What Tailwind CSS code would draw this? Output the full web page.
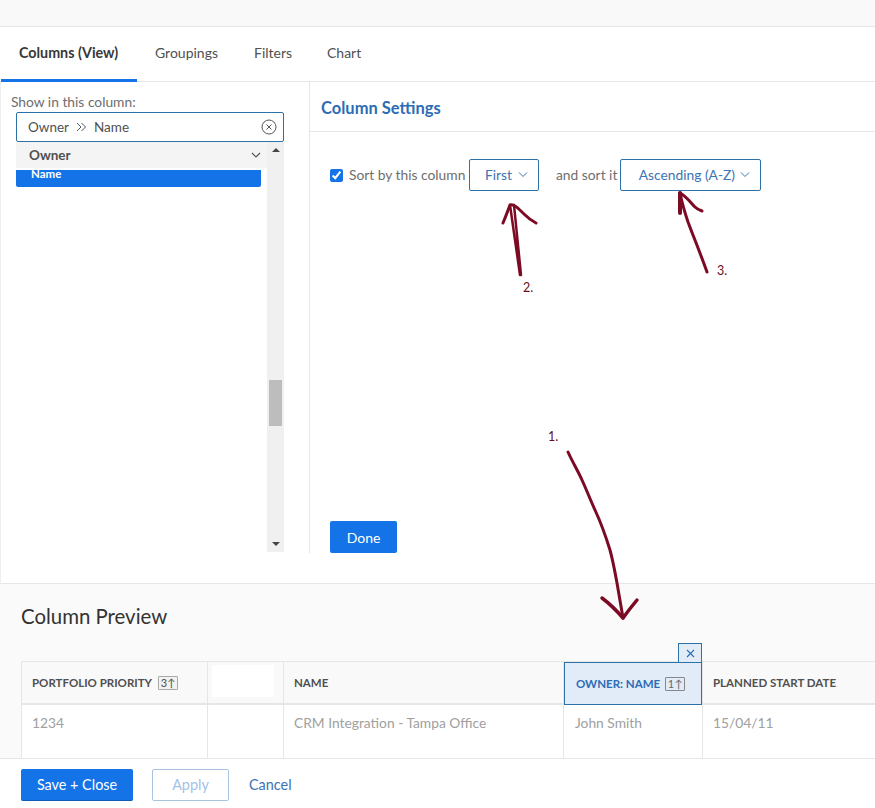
<!DOCTYPE html>
<html lang="en">
<head>
    <meta charset="UTF-8">
    <meta name="viewport" content="width=device-width, initial-scale=1.0">
    <title>Column Settings</title>
    <script src="https://cdn.jsdelivr.net/npm/@tailwindcss/browser@4"></script>
</head>
<body class="font-['Lato','Open_Sans',sans-serif] text-[#505050]">
    <div class="relative w-[875px] h-[808px] flex flex-col overflow-hidden bg-white">
        <!-- top strip -->
        <div class="h-[27px] shrink-0 bg-[#f9f9f9] border-b border-[#e6e6e6]"></div>

        <!-- tabs -->
        <div class="h-[55px] shrink-0 flex pl-px border-b border-[#e6e6e6] text-[14px]">
            <a class="w-[136px] pl-[18px] pt-[15px] text-[14.300px] font-bold text-[#383838] border-b-[3px] border-[#1473e6] h-[55px] whitespace-nowrap">Columns (View)</a>
            <a class="pl-[18px] pt-[15px] w-[117px]">Groupings</a>
            <a class="pt-[15px] w-[73px]">Filters</a>
            <a class="pt-[15px]">Chart</a>
        </div>

        <!-- column picker + settings -->
        <div class="h-[502px] shrink-0 flex items-start border-l border-[#eeeeee] border-b border-b-[#e6e6e6]">
            <div class="w-[309px] h-[471px] border-r border-[#e6e6e6] pt-[12px]">
                <div class="pl-[10px] text-[13.800px] leading-[16px] text-[#6e6e6e]">Show in this column:</div>
                <div class="ml-[15px] mt-[2px] w-[268px] h-[30px] flex items-center justify-between pl-[11px] pr-[6px] border border-[#2c72a8] rounded-[2px] text-[13.500px]">
                    <span class="flex items-center gap-[7px]">Owner
                        <svg width="11" height="10" viewBox="0 0 11 10" fill="none" stroke="#555" stroke-width="1"><path d="M1 1l4 4-4 4M5.500 1l4 4-4 4"/></svg>
                        Name</span>
                    <svg width="16" height="16" viewBox="0 0 16 16" fill="none" stroke="#555" stroke-width="1"><circle cx="8" cy="8" r="7"/><path d="M5.500 5.500l5 5M10.500 5.500l-5 5"/></svg>
                </div>
                <div class="ml-[15px] w-[268px] h-[410px] flex">
                    <div class="w-[251px]">
                        <div class="h-[26px] flex items-center justify-between bg-[#f4f4f4] pl-[13px] pr-[6px] text-[13.500px] font-bold text-[#505050]">Owner
                            <svg width="10" height="7" viewBox="0 0 10 7" fill="none" stroke="#555" stroke-width="1.200"><path d="M1 1l4 4 4-4"/></svg>
                        </div>
                        <div class="mt-[2px] w-[245px] h-[17px] bg-[#1473e6] rounded-b-[2px] pl-[15px] text-[11.500px] font-bold leading-[8px] text-white overflow-hidden">Name</div>
                    </div>
                    <div class="w-[17px] h-full bg-[#f0f0f0] flex flex-col items-center relative">
                        <span class="mt-[6px] w-0 h-0 border-x-[4px] border-x-transparent border-b-[4px] border-b-[#444]"></span>
                        <div class="absolute top-[238px] w-[13px] h-[46px] bg-[#bdbdbd]"></div>
                        <span class="mt-auto mb-[6px] w-0 h-0 border-x-[4px] border-x-transparent border-t-[4px] border-t-[#444]"></span>
                    </div>
                </div>
            </div>
            <div class="flex-1 h-[471px] flex flex-col">
                <div class="h-[50px] shrink-0 border-b border-[#e6e6e6] pl-[11px] pt-[16px] text-[16.500px] leading-[20px] font-bold text-[#2d6cb5]">Column Settings</div>
                <div class="flex items-center pl-[20px] pt-[27px] text-[13.800px] text-[#6e6e6e]">
                    <input type="checkbox" checked class="w-[13px] h-[13px] accent-[#1473e6] mr-[6px]">
                    <span class="w-[120px] whitespace-nowrap">Sort by this column</span>
                    <button class="w-[70px] h-[32px] flex items-center justify-end gap-[6px] pr-[10px] border border-[#2c72a8] rounded-[2px] text-[#3d72b5]">First
                        <svg width="10" height="6" viewBox="0 0 10 6" fill="none" stroke="#3d72b5" stroke-width="1"><path d="M1 .5l4 4 4-4"/></svg>
                    </button>
                    <span class="ml-[17px] w-[64px] whitespace-nowrap">and sort it</span>
                    <button class="w-[141px] h-[32px] flex items-center justify-end gap-[5px] pr-[10px] border border-[#2c72a8] rounded-[2px] text-[#3d72b5] whitespace-nowrap">Ascending (A-Z)
                        <svg width="10" height="6" viewBox="0 0 10 6" fill="none" stroke="#3d72b5" stroke-width="1"><path d="M1 .5l4 4 4-4"/></svg>
                    </button>
                </div>
                <button class="mt-auto ml-[20px] w-[67px] h-[32px] bg-[#1473e6] rounded-[2px] text-white text-[14px]">Done</button>
            </div>
        </div>

        <!-- preview -->
        <div class="flex-1 min-h-0 bg-[#fafafa] pl-[21px] pt-[20px] overflow-hidden">
            <h2 class="text-[20.400px] leading-[24px] font-normal text-[#333333]">Column Preview</h2>
            <div class="relative mt-[33px] flex h-[120px] bg-white border-l border-t border-[#e6e6e6] text-[13.800px]">
                <div class="w-[186px] border-r border-[#e6e6e6]">
                    <div class="h-[43px] flex items-center gap-[6px] pl-[10px] bg-[#f9f9f9] border-b-[2px] border-[#e6e6e6] text-[11.500px] font-bold text-[#505050]">PORTFOLIO PRIORITY
                        <span class="w-[20px] h-[14px] flex items-center justify-center border border-[#aaa] rounded-[1px] text-[11px] leading-none font-normal bg-[#f2f2f2]">3↑</span>
                    </div>
                    <div class="pl-[10px] pt-[8px] text-[#a0a0a0]">1234</div>
                </div>
                <div class="w-[76px] border-r border-[#e6e6e6]">
                    <div class="h-[43px] bg-[#f9f9f9] border-b-[2px] border-[#e6e6e6] px-[4px] pt-[3px] pb-[6px]"><div class="w-[62px] h-[32px] bg-white"></div></div>
                </div>
                <div class="w-[280px] border-r border-[#e6e6e6]">
                    <div class="h-[43px] flex items-center pl-[10px] bg-[#f9f9f9] border-b-[2px] border-[#e6e6e6] text-[11.500px] font-bold">NAME</div>
                    <div class="pl-[10px] pt-[8px] text-[#a0a0a0]">CRM Integration - Tampa Office</div>
                </div>
                <div class="w-[139px] border-r border-[#e6e6e6] relative">
                    <div class="h-[43px] flex items-center gap-[5px] pl-[11px] bg-[#e1ecf8] border border-[#2c72a8] text-[11.500px] font-bold text-[#2d6cb5]">OWNER: NAME
                        <span class="w-[20px] h-[14px] flex items-center justify-center border border-[#888] rounded-[1px] text-[11px] leading-none font-normal text-[#666]">1↑</span>
                    </div>
                    <div class="absolute -top-[19px] right-0 w-[24px] h-[20px] flex items-center justify-center bg-[#e1ecf8] border border-[#2c72a8]">
                        <svg width="9" height="9" viewBox="0 0 9 9" fill="none" stroke="#2d6cb5" stroke-width="1.100"><path d="M1 1l7 7M8 1l-7 7"/></svg>
                    </div>
                    <div class="pl-[11px] pt-[8px] text-[#a0a0a0]">John Smith</div>
                </div>
                <div class="flex-1">
                    <div class="h-[43px] flex items-center pl-[10px] bg-[#f9f9f9] border-b-[2px] border-[#e6e6e6] text-[11.500px] font-bold">PLANNED START DATE</div>
                    <div class="pl-[10px] pt-[8px] text-[#a0a0a0]">15/04/11</div>
                </div>
            </div>
        </div>

        <!-- footer -->
        <div class="relative h-[50px] shrink-0 flex items-center gap-[19px] pl-[21px] pt-[2px] bg-white border-t border-[#e6e6e6] text-[14.400px]">
            <button class="w-[112px] h-[32px] pt-px bg-[#1473e6] rounded-[2px] text-white border-b border-[#0f5cb8]">Save + Close</button>
            <button class="w-[77px] h-[32px] pt-px border border-[#a9c4de] rounded-[2px] text-[#a3c3e8]">Apply</button>
            <a class="ml-px pt-px text-[#3d72b5]">Cancel</a>
        </div>

        <!-- hand drawn annotations over the screenshot -->
        <svg class="absolute inset-0 pointer-events-none" width="875" height="808" viewBox="0 0 875 808" fill="none" stroke="#7b0a24" stroke-width="3" stroke-linecap="round" stroke-linejoin="round">
            <path d="M568 452C573 463 578 471 582 480C587 491 590 499 595 510C601 523 606 537 610 550C613 561 615 572 617 583C619 595 621 606 623 618"/>
            <path d="M602 598C610 604 617 611 623 618C628 611 632 606 637 600" stroke-width="3.500"/>
            <path d="M520 275L510 205M521 275L514 205" stroke-width="2.500"/>
            <path d="M503 223C506 216 508 210 510 205C514 204 518 208 524 214C528 218 532 221 536 223"/>
            <path d="M707 272C701 255 694 238 688 222C685 213 682 203 680 193"/>
            <path d="M680 213L680 193" stroke-width="4"/>
            <path d="M680 193C687 197 691 203 695 207C697 209 699 210 702 211"/>
        </svg>
        <span class="absolute left-[548px] top-[428px] text-[12.500px] text-[#6b0f1a]">1.</span>
        <span class="absolute left-[523px] top-[279px] text-[12.500px] text-[#6b0f1a]">2.</span>
        <span class="absolute left-[717px] top-[262px] text-[12.500px] text-[#6b0f1a]">3.</span>
    </div>
</body>
</html>
